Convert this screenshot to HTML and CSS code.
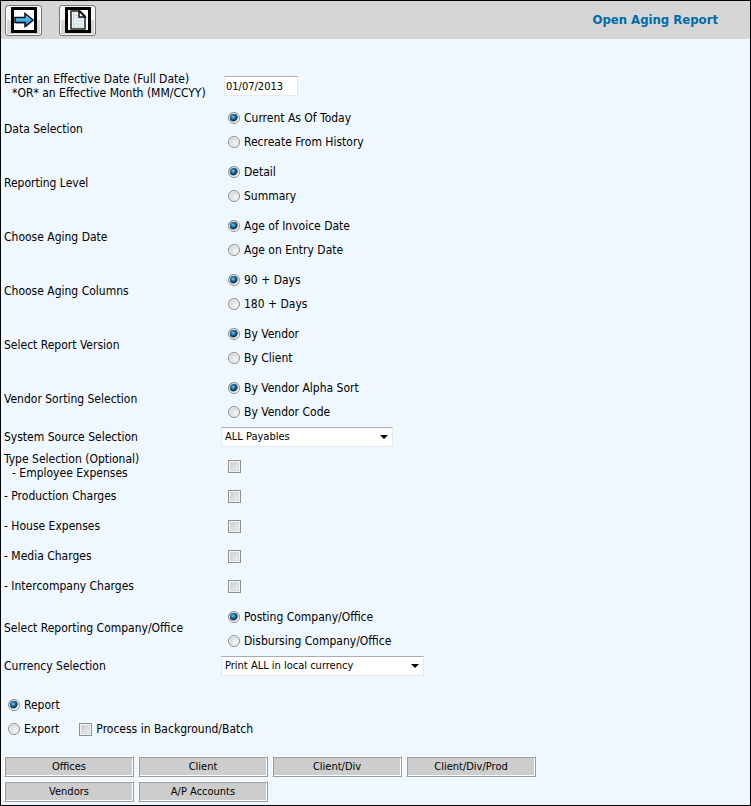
FILE: index.html
```html
<!DOCTYPE html>
<html lang="en">
<head>
    <meta charset="UTF-8">
    <meta name="viewport" content="width=device-width, initial-scale=1.0">
    <title>Open Aging Report</title>
    <link rel="stylesheet" href="styles.css">
</head>
<body>
    <header class="toolbar">
        <button type="submit" form="agingForm" class="tool" aria-label="Run report">
            <svg width="26" height="26" viewBox="0 0 26 26">
                <defs>
                    <linearGradient id="arrowFill" x1="0" y1="0" x2="0" y2="1">
                        <stop offset="0" stop-color="#9be0ff"/>
                        <stop offset="0.5" stop-color="#45b4f2"/>
                        <stop offset="1" stop-color="#1a78d0"/>
                    </linearGradient>
                </defs>
                <rect width="26" height="26" fill="#000"/>
                <rect x="3" y="3" width="20" height="20" fill="#fff"/>
                <path d="M5 12 H15 V8 L23 14 L15 21 V17 H5 Z" fill="#bbb"/>
                <path d="M4 10.500 H14 V6.500 L22 13 L14 19.500 V15.500 H4 Z" fill="url(#arrowFill)" stroke="#111" stroke-width="1.500"/>
            </svg>
        </button>
        <button type="reset" form="agingForm" class="tool" aria-label="New report">
            <svg width="26" height="26" viewBox="0 0 26 26">
                <rect width="26" height="26" fill="#000"/>
                <rect x="3" y="3" width="20" height="20" fill="#fff"/>
                <path d="M6 4 H15 L20 9 V22 H6 Z" fill="#eef2f4" stroke="#222" stroke-width="1.500"/>
                <path d="M8 8 H13 M8 11 H18 M8 14 H18 M8 17 H18 M8 20 H18" stroke="#b4dce4"/>
                <path d="M8.500 5 V21" stroke="#f0c4c4"/>
                <path d="M14 4 V10 H20 Z" fill="#fff" stroke="#111" stroke-width="1.500"/>
            </svg>
        </button>
        <h1>Open Aging Report</h1>
    </header>

    <form id="agingForm">
        <div class="row effective">
            <label class="name" for="effectiveDate">Enter an Effective Date (Full Date)<span class="indent">*OR* an Effective Month (MM/CCYY)</span></label>
            <input type="text" id="effectiveDate" class="date" value="01/07/2013">
        </div>

        <div class="row choice" role="radiogroup" aria-labelledby="dataSelection">
            <span class="name" id="dataSelection">Data Selection</span>
            <div class="options">
                <label><input type="radio" name="data" checked>Current As Of Today</label>
                <label><input type="radio" name="data">Recreate From History</label>
            </div>
        </div>
        <div class="row choice" role="radiogroup" aria-labelledby="reportingLevel">
            <span class="name" id="reportingLevel">Reporting Level</span>
            <div class="options">
                <label><input type="radio" name="level" checked>Detail</label>
                <label><input type="radio" name="level">Summary</label>
            </div>
        </div>
        <div class="row choice" role="radiogroup" aria-labelledby="agingDate">
            <span class="name" id="agingDate">Choose Aging Date</span>
            <div class="options">
                <label><input type="radio" name="aging_date" checked>Age of Invoice Date</label>
                <label><input type="radio" name="aging_date">Age on Entry Date</label>
            </div>
        </div>
        <div class="row choice" role="radiogroup" aria-labelledby="agingColumns">
            <span class="name" id="agingColumns">Choose Aging Columns</span>
            <div class="options">
                <label><input type="radio" name="aging_columns" checked>90 + Days</label>
                <label><input type="radio" name="aging_columns">180 + Days</label>
            </div>
        </div>
        <div class="row choice" role="radiogroup" aria-labelledby="reportVersion">
            <span class="name" id="reportVersion">Select Report Version</span>
            <div class="options">
                <label><input type="radio" name="version" checked>By Vendor</label>
                <label><input type="radio" name="version">By Client</label>
            </div>
        </div>
        <div class="row choice" role="radiogroup" aria-labelledby="vendorSorting">
            <span class="name" id="vendorSorting">Vendor Sorting Selection</span>
            <div class="options">
                <label><input type="radio" name="sorting" checked>By Vendor Alpha Sort</label>
                <label><input type="radio" name="sorting">By Vendor Code</label>
            </div>
        </div>

        <div class="row">
            <label class="name" for="source">System Source Selection</label>
            <div class="dropdown">
                <select id="source">
                    <option>ALL Payables</option>
                </select>
                <svg width="8" height="4" viewBox="0 0 8 4"><path d="M0 0 H8 L4 4 Z"/></svg>
            </div>
        </div>

        <div class="types">
            <div class="row">
                <label class="name" for="employee">Type Selection (Optional)<span class="indent">- Employee Expenses</span></label>
                <input type="checkbox" id="employee">
            </div>
            <div class="row">
                <label class="name" for="production">- Production Charges</label>
                <input type="checkbox" id="production">
            </div>
            <div class="row">
                <label class="name" for="house">- House Expenses</label>
                <input type="checkbox" id="house">
            </div>
            <div class="row">
                <label class="name" for="media">- Media Charges</label>
                <input type="checkbox" id="media">
            </div>
            <div class="row">
                <label class="name" for="intercompany">- Intercompany Charges</label>
                <input type="checkbox" id="intercompany">
            </div>
        </div>

        <div class="row choice" role="radiogroup" aria-labelledby="reportingCompany">
            <span class="name" id="reportingCompany">Select Reporting Company/Office</span>
            <div class="options">
                <label><input type="radio" name="company" checked>Posting Company/Office</label>
                <label><input type="radio" name="company">Disbursing Company/Office</label>
            </div>
        </div>
        <div class="row">
            <label class="name" for="currency">Currency Selection</label>
            <div class="dropdown wide">
                <select id="currency">
                    <option>Print ALL in local currency</option>
                </select>
                <svg width="8" height="4" viewBox="0 0 8 4"><path d="M0 0 H8 L4 4 Z"/></svg>
            </div>
        </div>

        <div class="output options">
            <label><input type="radio" name="output" checked>Report</label>
            <div class="export">
                <label><input type="radio" name="output">Export</label>
                <label><input type="checkbox" name="batch">Process in Background/Batch</label>
            </div>
        </div>

        <div class="filters">
            <button type="button">Offices</button>
            <button type="button">Client</button>
            <button type="button">Client/Div</button>
            <button type="button">Client/Div/Prod</button>
            <button type="button">Vendors</button>
            <button type="button">A/P Accounts</button>
        </div>
    </form>
</body>
</html>
```

FILE: styles.css
```css
* { box-sizing: border-box; }
html { background: #eff7ff; }
body { margin: 0; min-height: 100vh; border: 1px solid #000; background: #eff7ff; color: #000; font: 12px/14px Tahoma, "DejaVu Sans Condensed", "DejaVu Sans", sans-serif; }
input, select, button { font: inherit; color: inherit; margin: 0; }

/* Top bar */
.toolbar { display: flex; align-items: center; gap: 17px; height: 38px; padding: 0 32px 0 4px; background: #d6d6d6; }
.toolbar h1 { margin: 0 0 0 auto; font-size: 13px; line-height: 16px; color: #006ba8; }
.tool { display: flex; align-items: center; justify-content: center; width: 37px; height: 31px; padding: 0; border: 1px solid #777; border-radius: 3px; background: linear-gradient(#f5f5f5 50%, #dadada 50%, #d2d2d2); box-shadow: inset 0 0 0 1px #fafafa; }

/* Form rows */
form { padding: 33px 3px 2px; }
.row { display: grid; grid-template-columns: 217px 1fr; align-items: center; }
.effective { margin-bottom: 3px; }
.choice { min-height: 54px; }
.choice .name { padding-bottom: 2px; }
.indent { display: block; padding-left: 8px; }
.options label { display: flex; align-items: center; min-height: 24px; gap: 4px; }
.choice .options { padding-left: 7px; }
.types { padding: 4px 0 1px; }
.types .row { min-height: 30px; }
.types input { margin-left: 7px; }

.date { width: 74px; height: 20px; margin: 0 0 0 3px; padding: 0 1px; font-size: 11px; border: 1px solid #e3e9ef; border-top-color: #abadb3; background: #fff; }

.dropdown { display: grid; align-items: center; width: 172px; }
.dropdown.wide { width: 203px; }
.dropdown select { grid-area: 1 / 1; width: 100%; height: 20px; padding: 0 18px 0 3px; appearance: none; font-size: 11px; border: 1px solid #e3e9ef; border-top-color: #abadb3; border-radius: 0; background: #fff; }
.dropdown svg { grid-area: 1 / 1; justify-self: end; margin-right: 5px; pointer-events: none; }

/* Radios and tick boxes */
input[type="radio"] { appearance: none; flex: none; width: 12px; height: 12px; border: 1px solid #8e8f8f; border-radius: 50%; background: radial-gradient(circle at 65% 65%, #f6f6f6, #c4c8cc); box-shadow: inset 0 0 0 1px #f4f4f4; }
input[type="radio"]:checked { background: radial-gradient(circle at 42% 40%, #7fd4f5 0, #1b6f9f 2px, #0b2f4d 4px, #f4f4f4 5px); }
input[type="checkbox"] { appearance: none; flex: none; width: 13px; height: 13px; border: 1px solid #8e8f8f; background: linear-gradient(135deg, #c3c7cc, #f6f6f6); box-shadow: inset 0 0 0 1px #f4f4f4, inset 0 0 0 2px #d5d8dc; }

.output { padding: 17px 0 15px 4px; }
.export { display: flex; gap: 20px; }

/* Lookup buttons */
.filters { display: grid; grid-template-columns: repeat(auto-fill, 130px); gap: 4px; max-width: 536px; }
.filters button { height: 21px; padding: 0; font-size: 11px; line-height: 14px; border: 1px solid; border-color: #fff #9c9c9c #9c9c9c #fff; background: #cdcdcd; box-shadow: inset 1px 1px #9c9c9c, inset -1px -1px #fff; }
```
